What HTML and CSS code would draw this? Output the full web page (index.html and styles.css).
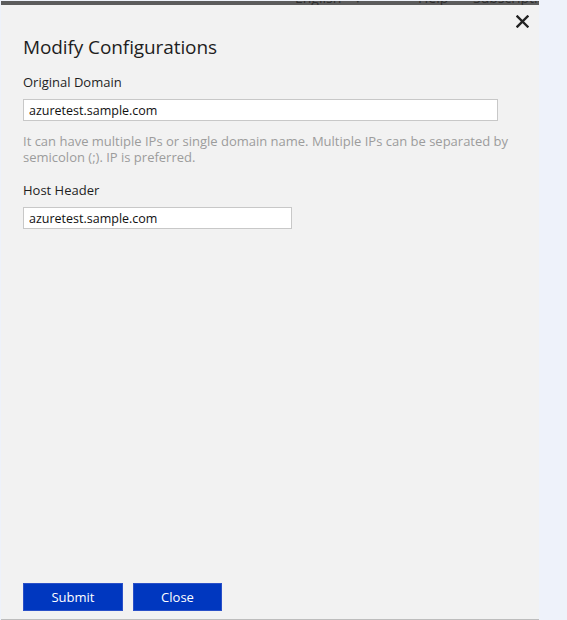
FILE: index.html
```html
<!DOCTYPE html>
<html>
<head>
<meta charset="utf-8">
<link rel="stylesheet" href="styles.css">
</head>
<body>
<div class="panel">
  <div class="topbar">
    <span class="nav-item nav-lang">English <span class="caret">▾</span></span>
    <span class="nav-item nav-help">Help</span>
    <span class="nav-item nav-sub">Subscriptions</span>
  </div>
  <div class="content">
    <div class="title-row">
      <h1 class="title">Modify Configurations</h1>
      <button class="close-x" aria-label="close">
        <svg width="13" height="13" viewBox="0 0 13 13"><path d="M1.5 1.5 L11.5 11.5 M11.5 1.5 L1.5 11.5" stroke="#222" stroke-width="2.4" stroke-linecap="square"/></svg>
      </button>
    </div>
    <div class="field">
      <label class="label">Original Domain</label>
      <input class="input input-wide" type="text" value="azuretest.sample.com">
      <p class="help">It can have multiple IPs or single domain name. Multiple IPs can be separated by semicolon (;). IP is preferred.</p>
    </div>
    <div class="field">
      <label class="label">Host Header</label>
      <input class="input input-narrow" type="text" value="azuretest.sample.com">
    </div>
    <div class="footer">
      <button class="btn btn-submit">Submit</button>
      <button class="btn btn-close">Close</button>
    </div>
  </div>
</div>
</body>
</html>
```
FILE: styles.css
```css
html, body {
  margin: 0;
  padding: 0;
}
body {
  background: #eef2fa;
  font-family: "Open Sans", "Noto Sans", sans-serif;
  padding: 1px 0 0 1px;
  height: 620px;
  box-sizing: border-box;
  overflow: hidden;
}
.panel {
  width: 538px;
  height: 618px;
  background: #f2f2f2;
  border-bottom: 1px solid #bdbdbd;
  display: flex;
  flex-direction: column;
}
.topbar {
  height: 4px;
  background: #5c5c5c;
  overflow: hidden;
  position: relative;
}
.nav-item {
  position: absolute;
  top: -11px;
  font-size: 14px;
  line-height: 16px;
  color: #2e2e2e;
  white-space: nowrap;
}
.nav-lang { left: 294px; }
.caret { margin-left: 10px; font-size: 11px; }
.nav-help { left: 417px; }
.nav-sub { left: 472px; }
.content {
  flex: 1;
  display: flex;
  flex-direction: column;
  padding: 0 0 8px 22px;
}
.title-row {
  display: flex;
  justify-content: space-between;
  align-items: flex-start;
  padding-right: 10px;
}
.title {
  margin: 29px 0 0 0;
  font-size: 19px;
  line-height: 26px;
  font-weight: 400;
  color: #1e1e1e;
  letter-spacing: -0.1px;
}
.close-x {
  margin-top: 10px;
  border: 0;
  background: transparent;
  padding: 0;
  width: 14px;
  height: 14px;
  cursor: pointer;
}
.field {
  display: flex;
  flex-direction: column;
  align-items: flex-start;
}
.label {
  margin-top: 13px;
  font-size: 13px;
  line-height: 18px;
  color: #1e1e1e;
}
.field + .field .label {
  margin-top: 16px;
}
.input {
  margin-top: 8px;
  height: 22px;
  box-sizing: border-box;
  border: 1px solid #c8c8c8;
  background: #fff;
  font-family: inherit;
  font-size: 12.5px;
  color: #111;
  padding: 0 5px;
  outline: none;
}
.input-wide { width: 475px; }
.input-narrow { width: 269px; }
.help {
  margin: 12px 0 0 0;
  width: 500px;
  font-size: 13px;
  line-height: 16px;
  color: #9c9c9c;
}
.footer {
  margin-top: auto;
  display: flex;
  gap: 10px;
}
.btn {
  height: 28px;
  border: 1px solid #2a50c8;
  background: #0037bf;
  color: #fff;
  font-family: inherit;
  font-size: 13px;
  padding: 0;
  cursor: pointer;
}
.btn-submit { width: 100px; }
.btn-close { width: 89px; }
```
